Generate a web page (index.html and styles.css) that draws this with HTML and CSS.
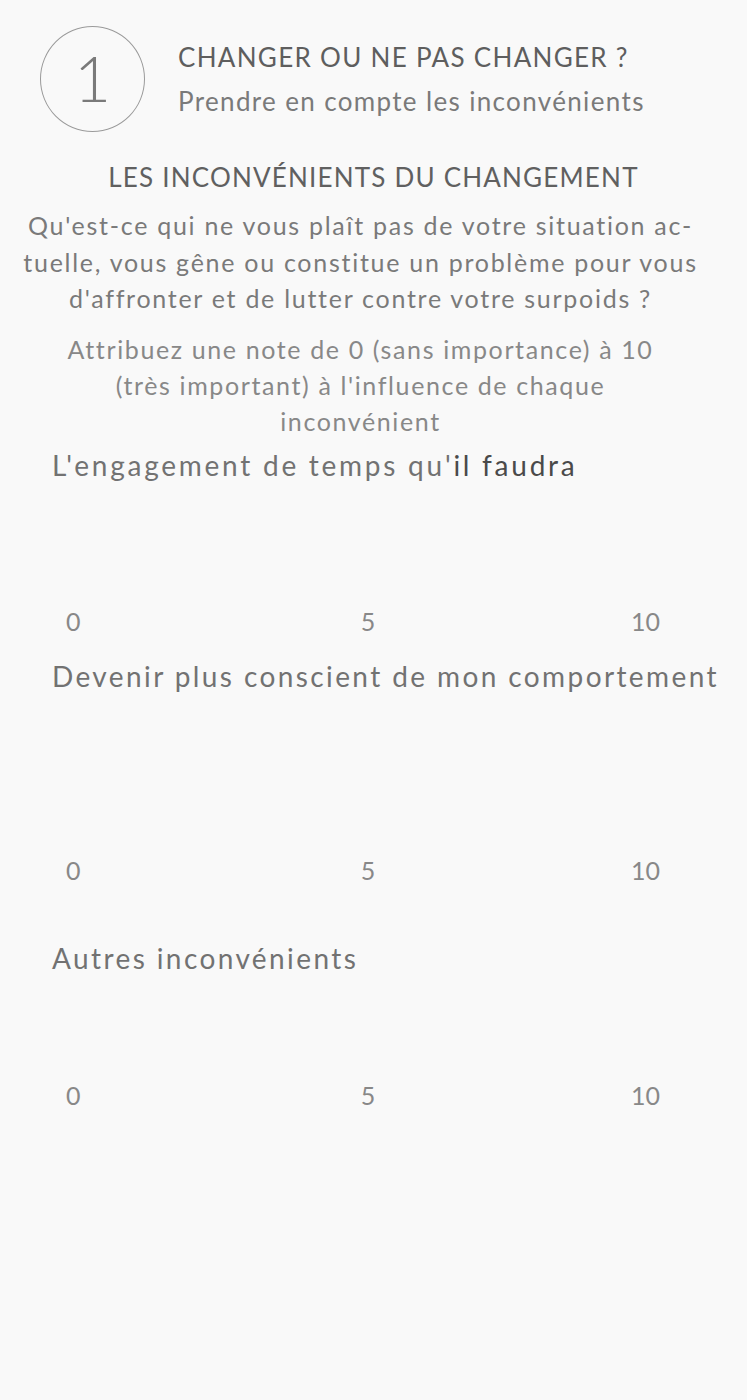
FILE: index.html
```html
<!DOCTYPE html>
<html lang="fr">
<head>
<meta charset="utf-8">
<link rel="stylesheet" href="styles.css">
</head>
<body>
<div class="page">
  <header class="head">
    <div class="step">1</div>
    <div class="head-text">
      <div class="head-title">CHANGER OU NE PAS CHANGER ?</div>
      <div class="head-sub">Prendre en compte les inconvénients</div>
    </div>
  </header>
  <h2 class="section-title">LES INCONVÉNIENTS DU CHANGEMENT</h2>
  <p class="question">Qu'est-ce qui ne vous plaît pas de votre situation ac-<br>tuelle, vous gêne ou constitue un problème pour vous<br>d'affronter et de lutter contre votre surpoids ?</p>
  <p class="instruction">Attribuez une note de 0 (sans importance) à 10<br>(très important) à l'influence de chaque<br>inconvénient</p>

  <div class="item item-1">
    <div class="item-label">L'engagement de temps qu'<span class="dark">il faudra</span></div>
    <div class="scale"><span>0</span><span>5</span><span>10</span></div>
  </div>
  <div class="item item-2">
    <div class="item-label">Devenir plus conscient de mon comportement</div>
    <div class="scale"><span>0</span><span>5</span><span>10</span></div>
  </div>
  <div class="item item-3">
    <div class="item-label">Autres inconvénients</div>
    <div class="scale"><span>0</span><span>5</span><span>10</span></div>
  </div>
</div>
</body>
</html>
```
FILE: styles.css
```css
html, body {
  margin: 0;
  padding: 0;
  background: #f9f9f9;
}
body {
  font-family: "Lato", "Noto Sans", sans-serif;
  color: #777;
}
.page {
  width: 747px;
  min-height: 1400px;
}
.head {
  display: flex;
  align-items: flex-start;
  padding: 26px 0 0 40px;
}
.step {
  width: 103px;
  height: 102px;
  border: 1px solid #9a9a9a;
  border-radius: 50%;
  display: flex;
  align-items: center;
  justify-content: center;
  font-size: 64px;
  font-weight: 300;
  color: #7a7a7a;
  line-height: 1;
  padding-bottom: 2px;
  box-sizing: content-box;
}
.head-text {
  margin-left: 33px;
  padding-top: 14px;
}
.head-title {
  font-size: 26px;
  line-height: 34px;
  color: #5e5e5e;
  letter-spacing: 1.3px;
}
.head-sub {
  font-size: 26px;
  line-height: 34px;
  margin-top: 10px;
  color: #7a7a7a;
  letter-spacing: 1.35px;
}
.section-title {
  margin: 28px 0 0;
  font-weight: 400;
  font-size: 26px;
  line-height: 34px;
  text-align: center;
  color: #606060;
  letter-spacing: 1.2px;
}
.question {
  margin: 13px 0 0;
  padding-right: 26px;
  text-align: center;
  font-size: 25px;
  line-height: 36.5px;
  color: #7a7a7a;
  letter-spacing: 1.72px;
}
.instruction {
  margin: 14px 0 0;
  padding-right: 26px;
  text-align: center;
  font-size: 25px;
  line-height: 36px;
  color: #888;
  letter-spacing: 1.62px;
}
.item {
  padding-left: 52px;
}
.item-label {
  font-size: 28px;
  line-height: 36px;
  color: #727272;
  letter-spacing: 2.4px;
}
.item-1 .item-label {
  letter-spacing: 2.75px;
}
.item-label .dark {
  color: #4a4a4a;
}
.scale {
  display: grid;
  grid-template-columns: 1fr 1fr 1fr;
  width: 594px;
  margin-left: 14px;
  font-size: 25px;
  line-height: 30px;
  color: #888;
}
.scale span:nth-child(2) {
  text-align: center;
  padding-left: 10px;
}
.scale span:nth-child(3) {
  text-align: right;
}
.item-1 { margin-top: 8px; }
.item-1 .scale { margin-top: 123px; }
.item-2 { margin-top: 22px; }
.item-2 .scale { margin-top: 161px; }
.item-3 { margin-top: 55px; }
.item-3 .scale { margin-top: 104px; }
```
